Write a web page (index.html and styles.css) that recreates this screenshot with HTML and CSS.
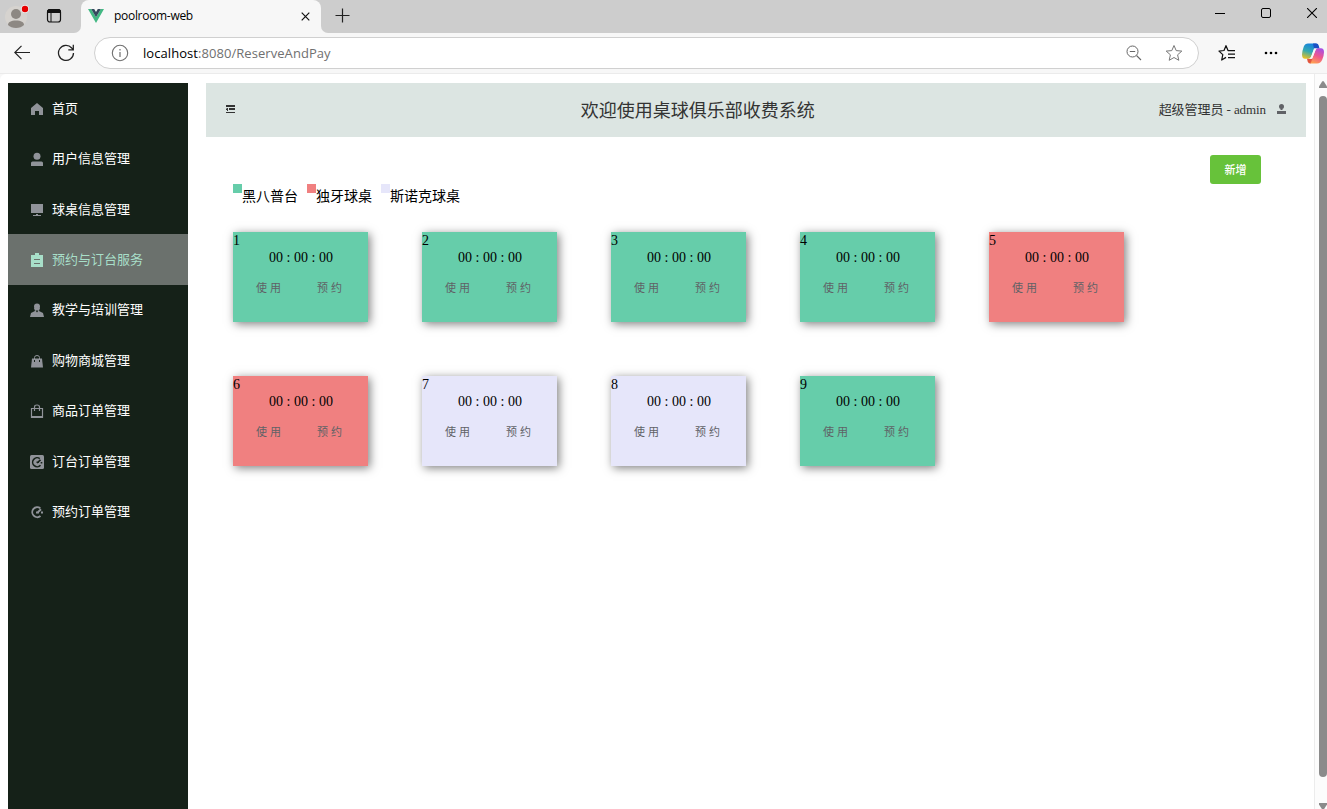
FILE: index.html
```html
<!DOCTYPE html>
<html lang="zh-CN">
<head>
<meta charset="utf-8">
<title>poolroom-web</title>
<link rel="stylesheet" href="styles.css">
</head>
<body>
<div class="tabbar">
  <div class="tabtools">
    <svg class="avatar" width="28" height="28" viewBox="0 0 28 28"><circle cx="13" cy="14" r="11" fill="#d6d3cf"/><circle cx="13" cy="11" r="5" fill="#8d8883"/><path d="M5 22c0-3 3-4.500 8-4.500s8 1.500 8 4.500c-2 2-4.500 3-8 3s-6-1-8-3z" fill="#8d8883"/><circle cx="22" cy="6" r="4" fill="#efefef"/><circle cx="22" cy="6" r="3.200" fill="#e60000"/></svg>
    <svg class="tabsicon" width="16" height="16" viewBox="0 0 16 16"><rect x="1.500" y="1.500" width="13" height="12.500" rx="2.500" fill="none" stroke="#111" stroke-width="1.200"/><path d="M1.500 4.500V3.500q0-2 2-2h9q2 0 2 2V4.500z" fill="#111" stroke="#111"/><path d="M5 5v9" stroke="#111"/></svg>
  </div>
  <div class="tab">
    <svg width="16" height="14" viewBox="0 0 16 14"><path d="M0 0h3.200L8 8.300 12.800 0H16L8 14z" fill="#42b883"/><path d="M3.200 0h3L8 3.100 9.800 0h3L8 8.300z" fill="#35495e"/></svg>
    <span class="tabname">poolroom-web</span>
    <svg width="9" height="9" viewBox="0 0 9 9"><path d="M.7.7l7.600 7.600M8.300.7L.7 8.300" stroke="#111" stroke-width="1.200"/></svg>
  </div>
  <div class="strip">
    <svg class="plus" width="15" height="15" viewBox="0 0 15 15"><path d="M7.500 .5v14M.5 7.500h14" stroke="#222" stroke-width="1.200"/></svg>
    <div class="winctl">
      <svg width="10" height="10" viewBox="0 0 10 10"><path d="M0 5.500h10" stroke="#000"/></svg>
      <svg width="10" height="10" viewBox="0 0 10 10"><rect x=".5" y=".5" width="9" height="9" rx="1.500" fill="none" stroke="#000"/></svg>
      <svg width="10" height="10" viewBox="0 0 10 10"><path d="M0 0l10 10M10 0L0 10" stroke="#000" stroke-width="1.100"/></svg>
    </div>
  </div>
</div>
<div class="toolbar">
  <svg class="back" width="16" height="16" viewBox="0 0 16 16"><path d="M16 7.500H.8M7.500 .8L.8 7.500l6.700 6.700" fill="none" stroke="#222" stroke-width="1.200"/></svg>
  <svg class="reload" width="18" height="18" viewBox="0 0 18 18"><path d="M16.500 9A7.500 7.500 0 1 1 14.700 4L16.300 5.500M16.300 .8v5h-5" fill="none" stroke="#222" stroke-width="1.250"/></svg>
  <div class="address">
    <svg width="18" height="18" viewBox="0 0 18 18"><circle cx="9" cy="9" r="7.700" fill="none" stroke="#707070" stroke-width="1.100"/><path d="M9 8v5M9 5v1.500" stroke="#707070" stroke-width="1.200"/></svg>
    <span class="url"><b>localhost</b>:8080/ReserveAndPay</span>
    <svg class="mag" width="16" height="16" viewBox="0 0 16 16"><circle cx="6.500" cy="6.500" r="5.500" fill="none" stroke="#666"/><path d="M3.800 6.500h5.400M10.500 10.500l4.500 4.500" stroke="#666" stroke-width="1.100"/></svg>
    <svg width="18" height="18" viewBox="0 0 18 18"><path d="M9 1.500l2.200 5.100 5.600.5-4.200 3.700 1.200 5.500L9 13.500l-4.800 2.800 1.200-5.500L1.200 7.100l5.600-.5z" fill="none" stroke="#777" stroke-linejoin="round"/></svg>
  </div>
  <svg class="fav" width="18" height="18" viewBox="0 0 18 18"><path d="M11.300 6.500H10L8 1.700 6 6.500l-5 .6 3.800 3.500L3.700 16 8 13.400M11 6.600h6M10 10h7M10 13.500h7" fill="none" stroke="#111" stroke-width="1.250" stroke-linejoin="round"/></svg>
  <svg class="dots" width="14" height="4" viewBox="0 0 14 4"><circle cx="2" cy="2" r="1.300"/><circle cx="7" cy="2" r="1.300"/><circle cx="12" cy="2" r="1.300"/></svg>
  <svg class="copilot" width="22" height="21" viewBox="0 0 22 21">
    <defs>
      <linearGradient id="ca" x1="0.500" y1="0" x2="0.200" y2="1"><stop offset="0" stop-color="#1683dc"/><stop offset=".5" stop-color="#35aab0"/><stop offset="1" stop-color="#f2c11c"/></linearGradient>
      <linearGradient id="cb" x1="0.700" y1="0" x2="0.300" y2="1"><stop offset="0" stop-color="#a64fe5"/><stop offset=".5" stop-color="#f0568e"/><stop offset="1" stop-color="#ffa052"/></linearGradient>
    </defs>
    <path d="M6 .5h8.500L12.500 5 9 14q-.8 1.700-3 1.700H3Q0 15.700 0 11.500q0-3 1.800-8Q3 .5 6 .5z" fill="url(#ca)"/>
    <path d="M11 .5h3.500q1.700 0 2.200 2l.8 3H12z" fill="#1a50c4"/>
    <path d="M16 5.200h3q3 0 3 4 0 3-1.700 7.300-1.600 4-5.300 4H8L10 16l3.500-9q.8-1.800 2.500-1.800z" fill="url(#cb)"/>
    <path d="M5 15.700h5.500L8.500 20.500H8q-1.700 0-2.300-2z" fill="#e2553c"/>
    <path d="M12 5.500h3.200q-1.200.4-1.700 1.700l-3 7.500q-.4 1-1.500 1H7q1.500-.3 2-1.700z" fill="#f7f7f7"/>
  </svg>
</div>

<div class="page">
  <nav class="sidebar">
    <a class="item"><svg class="ico" viewBox="0 0 14 14"><path d="M7 1l6 5v7H9V9H5v4H1V6z"/></svg>首页</a>
    <a class="item"><svg class="ico" viewBox="0 0 14 14"><circle cx="7" cy="4.300" r="3.500"/><path d="M1 14v-3q0-1.500 1.500-1.500h9q1.500 0 1.500 1.500v3z"/></svg>用户信息管理</a>
    <a class="item"><svg class="ico" viewBox="0 0 14 14"><path d="M1 1h12v9H1zM6 11h2v1h3v1H3v-1h3z"/></svg>球桌信息管理</a>
    <a class="item active"><svg class="ico" viewBox="0 0 14 14"><path fill-rule="evenodd" d="M1 2h4V0h4v2h4v12H1zM4 6v1h6V6zm0 4v1h6v-1z"/></svg>预约与订台服务</a>
    <a class="item"><svg class="ico" viewBox="0 0 14 14"><circle cx="7" cy="3.500" r="3"/><path d="M4 5h6L9 8l4 2 1 4H0l1-4 4-2z"/><path class="cut" d="M5.500 7.500h3L7 9.500z"/></svg>教学与培训管理</a>
    <a class="item"><svg class="ico" viewBox="0 0 14 14"><path d="M4.500 5V3.500q0-2 2.500-2t2.500 2V5" fill="none" stroke="#909399"/><path d="M2 4.500h10L13 13.500H1z"/><path class="cut" d="M4 6h1v2H4zM9 6h1v2H9z"/></svg>购物商城管理</a>
    <a class="item"><svg class="ico line" viewBox="0 0 14 14"><path d="M1.500 4.500h11v9h-11zM4.500 7V3q0-2 2.500-2t2.500 2v4M1.500 12.500h11"/></svg>商品订单管理</a>
    <a class="item"><svg class="ico" viewBox="0 0 14 14"><rect width="14" height="14" rx="1.500"/><path class="cutline" d="M10.500 10.300A4.500 4.500 0 1 1 9.800 3.600M10.500 4.800L7 8M6.500 7.200h2.500M11.500 7v1.500"/></svg>订台订单管理</a>
    <a class="item"><svg class="ico thick" viewBox="0 0 14 14"><path d="M10.500 11A5 5 0 1 1 10.300 3.200M11 4.300L7 8M6 7.500h3M11 7.500h2"/></svg>预约订单管理</a>
  </nav>
  <div class="main">
    <header class="topbar">
      <svg class="fold" width="9" height="9" viewBox="0 0 9 9"><path d="M0 0h9v2H0zM3 3h6v2H3zM0 7h9v1H0zM0 3.500h1V3h1v3H1V5H0z"/></svg>
      <span class="title">欢迎使用桌球俱乐部收费系统</span>
      <span class="user">超级管理员 - admin</span>
      <svg class="usericon" width="9" height="10" viewBox="0 0 9 10"><circle cx="4.500" cy="2.500" r="2.500"/><path d="M3.500 4h2v2h-2zM0 7h9v3H0z"/></svg>
    </header>
    <div class="actions"><button class="add">新增</button></div>
    <div class="legend">
      <span class="key"><i class="swatch green"></i>黑八普台</span>
      <span class="key"><i class="swatch red"></i>独牙球桌</span>
      <span class="key"><i class="swatch lilac"></i>斯诺克球桌</span>
    </div>
    <div class="tables">
      <div class="card green"><span>1</span><div class="time">00 : 00 : 00</div><div class="ops"><span>使用</span><span>预约</span></div></div>
      <div class="card green"><span>2</span><div class="time">00 : 00 : 00</div><div class="ops"><span>使用</span><span>预约</span></div></div>
      <div class="card green"><span>3</span><div class="time">00 : 00 : 00</div><div class="ops"><span>使用</span><span>预约</span></div></div>
      <div class="card green"><span>4</span><div class="time">00 : 00 : 00</div><div class="ops"><span>使用</span><span>预约</span></div></div>
      <div class="card red"><span>5</span><div class="time">00 : 00 : 00</div><div class="ops"><span>使用</span><span>预约</span></div></div>
      <div class="card red"><span>6</span><div class="time">00 : 00 : 00</div><div class="ops"><span>使用</span><span>预约</span></div></div>
      <div class="card lilac"><span>7</span><div class="time">00 : 00 : 00</div><div class="ops"><span>使用</span><span>预约</span></div></div>
      <div class="card lilac"><span>8</span><div class="time">00 : 00 : 00</div><div class="ops"><span>使用</span><span>预约</span></div></div>
      <div class="card green"><span>9</span><div class="time">00 : 00 : 00</div><div class="ops"><span>使用</span><span>预约</span></div></div>
    </div>
  </div>
  <div class="scrollbar">
    <svg width="8" height="7" viewBox="0 0 8 7"><path d="M0 7V5.500L3 .8q1-1.500 2 0L8 5.500V7z"/></svg>
    <div class="thumb"></div>
    <svg width="8" height="7" viewBox="0 0 8 7"><path d="M0 0v1.500L3 6.200q1 1.500 2 0L8 1.500V0z"/></svg>
  </div>
</div>
</body>
</html>
```
FILE: styles.css
```css
* { box-sizing: border-box; }
html, body { height: 100%; overflow: hidden; }
body { margin: 0; background: #f7f7f7; display: flex; flex-direction: column; font-family: "Liberation Serif", "Noto Sans CJK SC", serif; color: #000; }
svg { display: block; flex: none; }

.tabbar { height: 33px; flex: none; display: flex; background: linear-gradient(#cdcdcd 60%, #f7f7f7 60%); }
.tabtools { width: 81px; display: flex; background: #cdcdcd; border-bottom-right-radius: 7px; padding: 3px 0 0 3px; }
.tabsicon { margin: 5px 0 0 15px; }
.tab { width: 240px; display: flex; align-items: center; padding: 0 11px 1px 7px; background: #f7f7f7; border-radius: 8px 8px 0 0; }
.tabname { flex: 1; padding-left: 10px; font: 12px/16px "Open Sans", sans-serif; letter-spacing: -.5px; }
.tabname { letter-spacing: -.3px; }
.strip { flex: 1; display: flex; background: #cdcdcd; border-bottom-left-radius: 7px; }
.plus { margin: 8px 0 0 14px; }
.winctl { display: flex; gap: 36px; margin-left: auto; padding: 8px 10px 0 0; }

.toolbar { height: 41px; flex: none; display: flex; align-items: center; padding-left: 14px; border-bottom: 1px solid #ebebeb; }
.reload { margin-left: 27px; }
.address { width: 1105px; height: 32px; margin-left: 19px; display: flex; align-items: center; padding: 0 15px 0 16px; background: #fff; border: 1px solid #d0d0d0; border-radius: 16px; }
.url { flex: 1; padding-left: 14px; font: 13px/18px "Open Sans", sans-serif; color: #707070; letter-spacing: .06px; }
.url b { font-weight: 400; color: #000; }
.mag { margin-right: 23px; }
.fav { margin-left: 19px; }
.dots { margin-left: 28px; }
.copilot { margin-left: 24px; }

.page { flex: 1; min-height: 0; display: flex; background: #fff; border-top-left-radius: 6px; padding-left: 8px; }
.sidebar { width: 180px; margin-top: 9px; background: #152118; }
.item { height: 50.4px; display: flex; align-items: center; gap: 8px; padding: 0 0 .6px 22px; font: 13px/18px "Noto Sans CJK SC", sans-serif; color: #fff; }
.item.active { background: #6b716d; color: #a8dfc9; }
.ico { width: 14px; height: 14px; fill: #909399; position: relative; top: 1px; }
.active .ico { fill: #a8dfc9; }
.cut { fill: #152118; }
.cutline { fill: none; stroke: #152118; stroke-width: 1.600; }
.line { fill: none; stroke: #909399; stroke-width: 1.200; }
.thick { fill: none; stroke: #909399; stroke-width: 1.900; }

.main { width: 1100px; margin: 9px 0 0 18px; }
.topbar { height: 54px; display: flex; align-items: center; padding: 0 20px 2px; background: #dce5e2; color: #333; }
.fold { fill: #333; }
.title { flex: 1; padding: 0 0 1px 2px; text-align: center; font: 18px/24px "Noto Sans CJK SC", sans-serif; }
.user { padding-top: 1px; font-size: 13px; line-height: 18px; letter-spacing: -.08px; }
.usericon { margin-left: 11px; fill: #606266; }
.actions { display: flex; justify-content: flex-end; padding: 18px 45px 0 0; }
.add { width: 51px; height: 29px; padding: 0 0 2px; border: 0; border-radius: 3px; background: #67c23a; color: #fff; font: 500 11px/16px "Noto Sans CJK SC", sans-serif; }
.legend { height: 48px; display: flex; gap: 9px; padding-left: 27px; font: 14px/22px "Noto Sans CJK SC", sans-serif; }
.key { display: flex; }
.swatch { width: 9px; height: 9px; }
.green { background: #66cdaa; }
.red { background: #f08080; }
.lilac { background: #e6e6fa; }
.tables { display: grid; grid-template-columns: repeat(5, 135px); gap: 54px; padding-left: 27px; }
.card { height: 90px; padding-top: 1px; font-size: 14px; line-height: 16px; box-shadow: 2px 2px 9px rgba(0, 0, 0, .5); display: flex; flex-direction: column; }
.time { margin-top: 1px; padding-left: 1px; text-align: center; }
.ops { display: flex; gap: 33px; margin-top: 13px; padding-left: 23px; font: 11px/16px "Noto Sans CJK SC", sans-serif; color: #606266; letter-spacing: 3px; }

.scrollbar { width: 13px; margin-left: auto; padding: 7px 0 0 4px; display: flex; flex-direction: column; background: #fcfcfc; border-left: 1px solid #ececec; fill: #8b8b8b; }
.thumb { width: 8px; height: 681px; margin: 8px 0 26px; flex: none; border-radius: 4px; background: #8b8b8b; }
```
